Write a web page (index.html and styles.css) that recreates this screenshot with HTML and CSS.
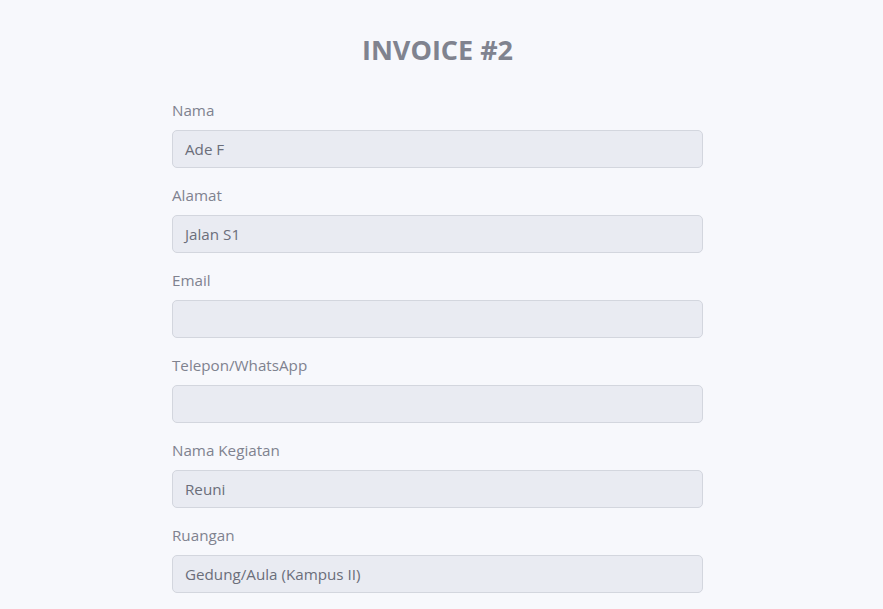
FILE: index.html
```html
<!DOCTYPE html>
<html lang="id">
<head>
<meta charset="utf-8">
<title>Invoice #2</title>
<link rel="stylesheet" href="styles.css">
</head>
<body>
<main class="page">
  <h1 class="title">INVOICE #2</h1>
  <form class="form">
    <div class="field">
      <label class="label">Nama</label>
      <div class="input">Ade F</div>
    </div>
    <div class="field">
      <label class="label">Alamat</label>
      <div class="input">Jalan S1</div>
    </div>
    <div class="field">
      <label class="label">Email</label>
      <div class="input"></div>
    </div>
    <div class="field">
      <label class="label">Telepon/WhatsApp</label>
      <div class="input"></div>
    </div>
    <div class="field">
      <label class="label">Nama Kegiatan</label>
      <div class="input">Reuni</div>
    </div>
    <div class="field">
      <label class="label">Ruangan</label>
      <div class="input">Gedung/Aula (Kampus II)</div>
    </div>
  </form>
</main>
</body>
</html>
```

FILE: styles.css
```css
html, body {
  margin: 0;
  padding: 0;
  background: #f7f8fc;
}
body {
  font-family: "Open Sans", "Noto Sans", sans-serif;
  color: #7d808e;
  overflow: hidden;
  height: 609px;
}
.page {
  width: 531px;
  margin: 0 auto;
  padding: 32px 8px 0 0;
  display: flex;
  flex-direction: column;
}
.title {
  margin: 0 0 32px;
  text-align: center;
  font-size: 27px;
  line-height: 36px;
  font-weight: 700;
  color: #80838f;
  letter-spacing: 0;
}
.form {
  display: flex;
  flex-direction: column;
  gap: 17px;
}
.field {
  display: flex;
  flex-direction: column;
  gap: 10px;
}
.label {
  font-size: 15.2px;
  line-height: 20px;
  color: #7f828f;
}
.input {
  box-sizing: border-box;
  height: 38px;
  padding: 0 12px;
  display: flex;
  align-items: center;
  background: #e9ebf2;
  border: 1px solid #d3d6de;
  border-radius: 5px;
  font-size: 15.2px;
  color: #6b6e7a;
}
```
